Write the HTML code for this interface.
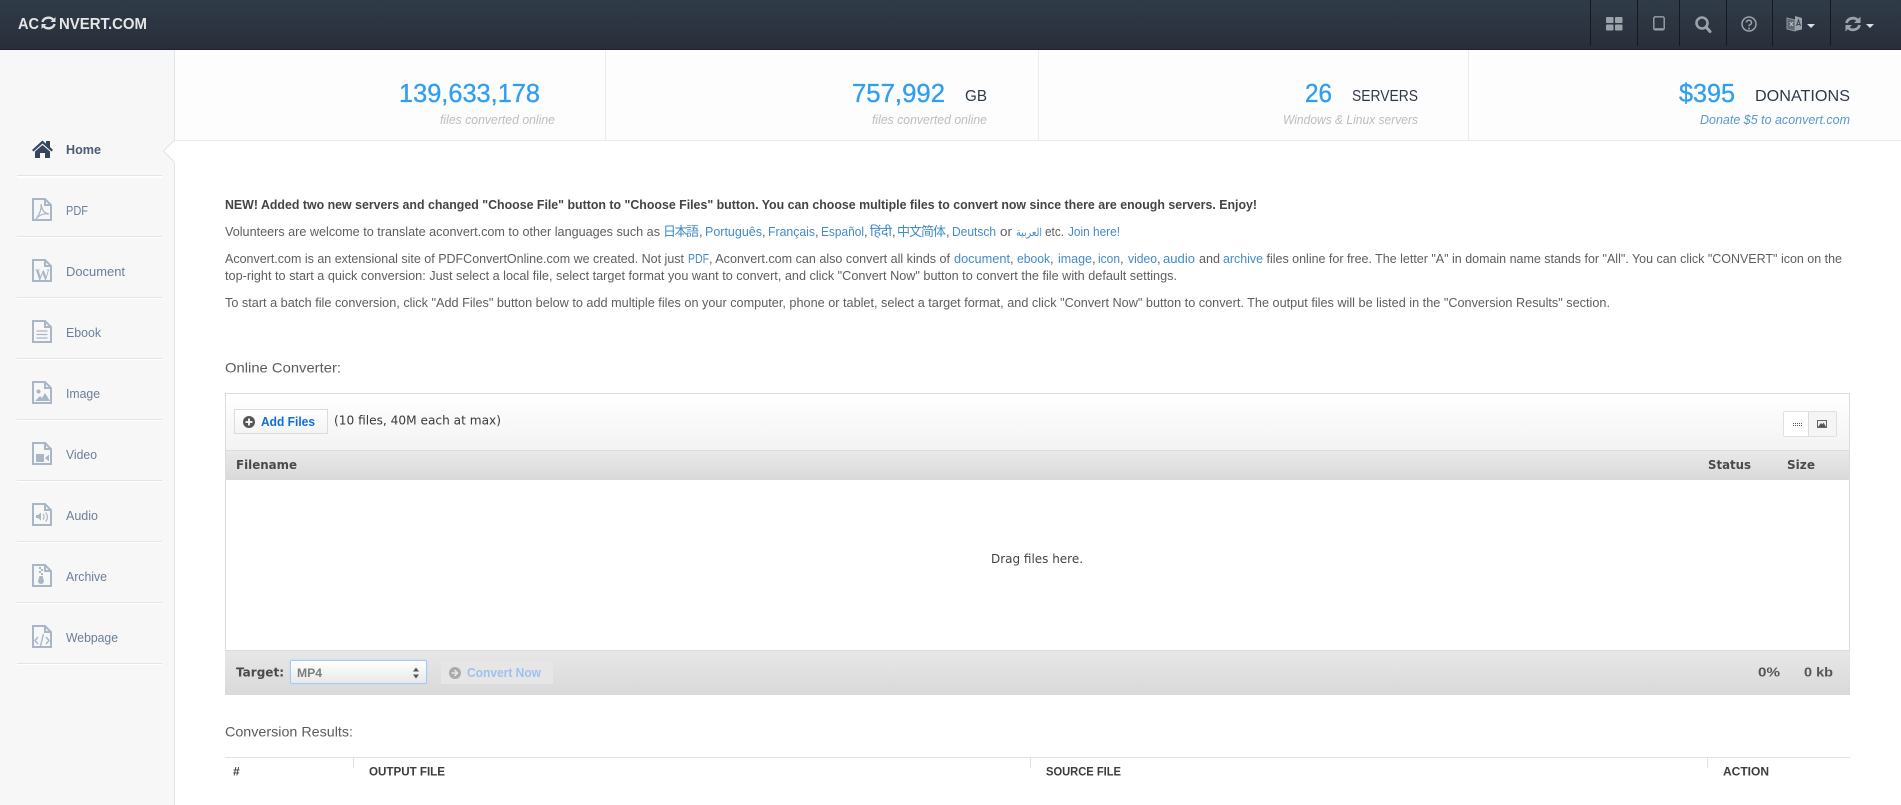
<!DOCTYPE html>
<html lang="en">
<head>
<meta charset="utf-8">
<title>Aconvert.com</title>
<style>
html,body{margin:0;padding:0;width:1901px;height:805px;overflow:hidden;background:#fff}
div{position:absolute;box-sizing:border-box}
svg{position:absolute;left:0;top:0}
text{font-family:"Liberation Sans","Noto Sans CJK JP",sans-serif;white-space:pre}
.b{font-size:13px;fill:#5e5e5e}
.l{font-size:13px;fill:#428bca}
.big{font-size:26px;fill:#2f9ff0;stroke:#2f9ff0;stroke-width:.35px}
.unit{font-size:16px;fill:#2f3a48}
.sub{font-size:13px;font-style:italic;fill:#bdbdbd}
.m{font-size:13px;fill:#6c7f99}
.h{font-size:14px;fill:#5c5c5c}
.d{font-family:"DejaVu Sans",sans-serif;font-size:12px}
.th{font-family:"DejaVu Sans",sans-serif;font-size:12px;font-weight:bold;fill:#4a4a4a}
.rh{font-size:12px;font-weight:bold;fill:#3c3c3c}
</style>
</head>
<body>
<div style="left:0;top:0;width:1901px;height:50px;background:linear-gradient(#2f3c48,#292e3a);border-bottom:1px solid #1d2129"></div>
<div style="left:0;top:50px;width:174px;height:755px;background:#f7f7f7"></div>
<div style="left:174px;top:50px;width:1727px;height:91px;background:#fdfdfd;border-bottom:1px solid #e9ecf0"></div>
<div style="left:174px;top:50px;width:1px;height:755px;background:#dde4ec"></div>
<div style="left:605px;top:50px;width:1px;height:90px;background:#e8ebf0"></div>
<div style="left:1038px;top:50px;width:1px;height:90px;background:#e8ebf0"></div>
<div style="left:1468px;top:50px;width:1px;height:90px;background:#e8ebf0"></div>

<div style="left:1590px;top:0;width:1px;height:46px;background:#15181f"></div>
<div style="left:1637px;top:0;width:1px;height:46px;background:#15181f"></div>
<div style="left:1679px;top:0;width:1px;height:46px;background:#15181f"></div>
<div style="left:1726px;top:0;width:1px;height:46px;background:#15181f"></div>
<div style="left:1772px;top:0;width:1px;height:46px;background:#15181f"></div>
<div style="left:1830px;top:0;width:1px;height:46px;background:#15181f"></div>

<div style="left:17px;top:175px;width:145px;height:3px;background:#fff;border-top:1px solid #dfe5ec"></div>
<div style="left:17px;top:236px;width:145px;height:2px;background:#fff;border-top:1px solid #dfe5ec"></div>
<div style="left:17px;top:297px;width:145px;height:2px;background:#fff;border-top:1px solid #dfe5ec"></div>
<div style="left:17px;top:358px;width:145px;height:2px;background:#fff;border-top:1px solid #dfe5ec"></div>
<div style="left:17px;top:419px;width:145px;height:2px;background:#fff;border-top:1px solid #dfe5ec"></div>
<div style="left:17px;top:480px;width:145px;height:2px;background:#fff;border-top:1px solid #dfe5ec"></div>
<div style="left:17px;top:541px;width:145px;height:2px;background:#fff;border-top:1px solid #dfe5ec"></div>
<div style="left:17px;top:602px;width:145px;height:2px;background:#fff;border-top:1px solid #dfe5ec"></div>
<div style="left:17px;top:663px;width:145px;height:2px;background:#fff;border-top:1px solid #dfe5ec"></div>

<div style="left:225px;top:393px;width:1625px;height:302px;border:1px solid #dcdcdc;border-bottom:0;background:#fff"></div>
<div style="left:226px;top:394px;width:1623px;height:56px;background:linear-gradient(#ffffff,#f3f3f3)"></div>
<div style="left:226px;top:450px;width:1623px;height:30px;background:linear-gradient(#e9e9e9,#d9d9d9);border-top:1px solid #dedede"></div>
<div style="left:225px;top:650px;width:1625px;height:45px;background:linear-gradient(#e7e7e7,#d9d9d9);border-top:1px solid #dcdcdc"></div>

<div style="left:234px;top:409px;width:94px;height:25px;background:linear-gradient(#fff,#f4f4f4);border:1px solid #dcdcdc"></div>
<div style="left:1783px;top:411px;width:54px;height:26px;background:#f5f5f5;border:1px solid #e0e0e0;border-radius:2px"></div>
<div style="left:1784px;top:412px;width:25px;height:24px;background:#fff;border-right:1px solid #dcdcdc"></div>
<div style="left:290px;top:660px;width:137px;height:24px;background:linear-gradient(#fff,#e9e9e9);border:1px solid #a8c9f5;border-radius:2px;box-shadow:0 0 2px #bcd6f8"></div>
<div style="left:441px;top:661px;width:112px;height:23px;background:#e6e6e6"></div>

<div style="left:225px;top:757px;width:1625px;height:1px;background:#e0e0e8"></div>
<div style="left:353px;top:757px;width:1px;height:11px;background:#e0e0e8"></div>
<div style="left:1030px;top:757px;width:1px;height:11px;background:#e0e0e8"></div>
<div style="left:1707px;top:757px;width:1px;height:11px;background:#e0e0e8"></div>

<svg width="1901" height="805" viewBox="0 0 1901 805" xmlns="http://www.w3.org/2000/svg">
  <defs>
    <g id="file" fill="none" stroke="#a9b6c6" stroke-width="2">
      <path d="M1 1H13L19 7V22H1Z"/><path d="M13 1V7H19"/>
    </g>
  </defs>

  <!-- sidebar notch -->
  <path d="M175 140L163 151L175 163Z" fill="#fff"/>
  <path d="M174.500 140L163.500 151L174.500 162" fill="none" stroke="#dde4ec" stroke-width="1"/>

  <!-- logo -->
  <text x="18" y="29" font-size="16" font-weight="bold" fill="#e6e6e6" textLength="21" lengthAdjust="spacingAndGlyphs">AC</text>
  <g transform="translate(48.500,23)" fill="none" stroke="#e0e0e0" stroke-width="2.400">
    <path d="M-6 -1A6 5 0 0 1 5 -3"/><path d="M6 1A6 5 0 0 1 -5 3"/>
    <path d="M7 -6V-1H2Z" fill="#e0e0e0" stroke="none"/><path d="M-7 6V1H-2Z" fill="#e0e0e0" stroke="none"/>
  </g>
  <text x="59" y="29" font-size="16" font-weight="bold" fill="#e6e6e6" textLength="88" lengthAdjust="spacingAndGlyphs">NVERT.COM</text>

  <!-- top icons -->
  <g fill="#9aa2aa">
    <rect x="1606" y="17" width="7.500" height="6" rx="1"/><rect x="1615" y="17" width="7.500" height="6" rx="1"/>
    <rect x="1606" y="24.500" width="7.500" height="6" rx="1"/><rect x="1615" y="24.500" width="7.500" height="6" rx="1"/>
  </g>
  <rect x="1653.800" y="16.800" width="10.400" height="13" rx="1.500" fill="none" stroke="#9aa2aa" stroke-width="1.400"/>
  <path d="M1655 28.800h8" stroke="#9aa2aa" stroke-width="1.200"/>
  <circle cx="1702" cy="23" r="5.500" fill="none" stroke="#9aa2aa" stroke-width="2.600"/>
  <path d="M1706 27L1710 31.500" stroke="#9aa2aa" stroke-width="3" stroke-linecap="round"/>
  <circle cx="1749" cy="24" r="7" fill="none" stroke="#9aa2aa" stroke-width="1.500"/>
  <path d="M1746.500 22.500a2.500 2.300 0 1 1 3.500 2.200c-.8.400-1 .8-1 1.600" fill="none" stroke="#9aa2aa" stroke-width="1.500"/>
  <circle cx="1749" cy="28.500" r="1" fill="#9aa2aa"/>
  <path d="M1787 18L1795 20V31L1787 29Z" fill="#5f6872" stroke="#8d959d" stroke-width="1"/>
  <path d="M1795 16L1802 18V29.500L1795 31Z" fill="#9aa2aa"/>
  <path d="M1790 22l3 4M1793 22l-3 4" stroke="#c3c8cd" stroke-width="1"/>
  <path d="M1796.500 26l2-6 2 6M1797.500 24.500h2" stroke="#39424e" stroke-width="1" fill="none"/>
  <path d="M1807 24h8l-4 4z" fill="#dcdfe2"/>
  <g transform="translate(1853,24)" fill="none" stroke="#9aa2aa" stroke-width="2.800">
    <path d="M-6.500 -1A6.500 6 0 0 1 5 -3.500"/><path d="M6.500 1A6.500 6 0 0 1 -5 3.500"/>
    <path d="M7.500 -7.500V-1H1Z" fill="#9aa2aa" stroke="none"/><path d="M-7.500 7.500V1H-1Z" fill="#9aa2aa" stroke="none"/>
  </g>
  <path d="M1866 24h8l-4 4z" fill="#dcdfe2"/>

  <!-- stats -->
  <text class="big" x="399" y="102" textLength="141" lengthAdjust="spacingAndGlyphs">139,633,178</text>
  <text class="sub" x="440" y="124" textLength="115" lengthAdjust="spacingAndGlyphs">files converted online</text>
  <text class="big" x="852" y="102" textLength="93" lengthAdjust="spacingAndGlyphs">757,992</text>
  <text class="unit" x="965" y="101" textLength="22" lengthAdjust="spacingAndGlyphs">GB</text>
  <text class="sub" x="872" y="124" textLength="115" lengthAdjust="spacingAndGlyphs">files converted online</text>
  <text class="big" x="1305" y="102" textLength="27" lengthAdjust="spacingAndGlyphs">26</text>
  <text class="unit" x="1352" y="101" textLength="66" lengthAdjust="spacingAndGlyphs">SERVERS</text>
  <text class="sub" x="1283" y="124" textLength="135" lengthAdjust="spacingAndGlyphs">Windows &amp; Linux servers</text>
  <text class="big" x="1679" y="102" textLength="56" lengthAdjust="spacingAndGlyphs">$395</text>
  <text class="unit" x="1755" y="101" textLength="95" lengthAdjust="spacingAndGlyphs">DONATIONS</text>
  <text class="sub" x="1700" y="124" textLength="150" lengthAdjust="spacingAndGlyphs" style="fill:#5a97d0">Donate $5 to aconvert.com</text>

  <!-- sidebar menu -->
  <path d="M32 150L42.500 140.500L46 143.700V141H50V147L53 150L51.500 151.500L42.500 143.500L33.500 151.500Z" fill="#34465c"/>
  <path d="M35 151.500L42.500 145L50 151.500V158H45V153H40V158H35Z" fill="#34465c"/>
  <text x="66" y="154" font-size="13" font-weight="bold" fill="#4a5c74" textLength="35" lengthAdjust="spacingAndGlyphs">Home</text>

  <use href="#file" x="32" y="198"/>
  <path d="M41 204c1 5 2 9 8 10c-5-1-10 1-13 5c3-4 6-9 5-15z" fill="none" stroke="#a9b6c6" stroke-width="1.200"/>
  <text class="m" x="66" y="215" textLength="22" lengthAdjust="spacingAndGlyphs">PDF</text>

  <use href="#file" x="32" y="259"/>
  <text x="35" y="280" font-family="Liberation Serif" font-size="16" font-weight="bold" fill="#a9b6c6" textLength="15" lengthAdjust="spacingAndGlyphs" style="font-family:'Liberation Serif',serif">W</text>
  <text class="m" x="66" y="276" textLength="59" lengthAdjust="spacingAndGlyphs">Document</text>

  <use href="#file" x="32" y="320"/>
  <path d="M36.500 331h11M36.500 334.500h11M36.500 338h11" stroke="#a9b6c6" stroke-width="1.300"/>
  <text class="m" x="66" y="337" textLength="35" lengthAdjust="spacingAndGlyphs">Ebook</text>

  <use href="#file" x="32" y="381"/>
  <circle cx="38.500" cy="391.500" r="2" fill="#a9b6c6"/>
  <path d="M35 401L40 396L42 398L45 393L50 401Z" fill="#a9b6c6"/>
  <text class="m" x="66" y="398" textLength="34" lengthAdjust="spacingAndGlyphs">Image</text>

  <use href="#file" x="32" y="442"/>
  <rect x="36" y="454" width="8" height="8" fill="#a9b6c6"/><path d="M45 458L49 454.500V461.500Z" fill="#a9b6c6"/>
  <text class="m" x="66" y="459" textLength="31" lengthAdjust="spacingAndGlyphs">Video</text>

  <use href="#file" x="32" y="503"/>
  <path d="M36 515h2l3-2.500v8l-3-2.500h-2z" fill="#a9b6c6"/>
  <path d="M43 514c1.500 1.500 1.500 4 0 5.500M45.500 512.500c2.500 2.500 2.500 6.500 0 9" fill="none" stroke="#a9b6c6" stroke-width="1.200"/>
  <text class="m" x="66" y="520" textLength="32" lengthAdjust="spacingAndGlyphs">Audio</text>

  <use href="#file" x="32" y="564"/>
  <path d="M39 567h2v2h-2zM41 569h2v2h-2zM39 571h2v2h-2zM41 573h2v2h-2z" fill="#a9b6c6"/>
  <path d="M39.500 576h3l1.500 5a3 3 0 1 1-6 0z" fill="#a9b6c6"/>
  <text class="m" x="66" y="581" textLength="41" lengthAdjust="spacingAndGlyphs">Archive</text>

  <use href="#file" x="32" y="625"/>
  <path d="M38 637l-3 3.500 3 3.500M46 637l3 3.500-3 3.500M43.500 634l-3 12" fill="none" stroke="#a9b6c6" stroke-width="1.400"/>
  <text class="m" x="66" y="642" textLength="52" lengthAdjust="spacingAndGlyphs">Webpage</text>

  <!-- intro text -->
  <text x="225" y="209" font-size="13" font-weight="bold" fill="#444" textLength="1032" lengthAdjust="spacingAndGlyphs">NEW! Added two new servers and changed "Choose File" button to "Choose Files" button. You can choose multiple files to convert now since there are enough servers. Enjoy!</text>

  <text class="b" x="225" y="236" textLength="435" lengthAdjust="spacingAndGlyphs">Volunteers are welcome to translate aconvert.com to other languages such as</text>
  <text class="l" x="663" y="236" textLength="36">日本語</text><text class="b" x="699" y="236">,</text>
  <text class="l" x="705" y="236" textLength="57" lengthAdjust="spacingAndGlyphs">Português</text><text class="b" x="762" y="236">,</text>
  <text class="l" x="768" y="236" textLength="47" lengthAdjust="spacingAndGlyphs">Français</text><text class="b" x="815" y="236">,</text>
  <text class="l" x="821" y="236" textLength="43" lengthAdjust="spacingAndGlyphs">Español</text><text class="b" x="864" y="236">,</text>
  <text class="l" x="870" y="236" textLength="22" lengthAdjust="spacingAndGlyphs">हिंदी</text><text class="b" x="892" y="236">,</text>
  <text class="l" x="897" y="236" textLength="49">中文简体</text><text class="b" x="946" y="236">,</text>
  <text class="l" x="952" y="236" textLength="44" lengthAdjust="spacingAndGlyphs">Deutsch</text>
  <text class="b" x="1000" y="236" textLength="12" lengthAdjust="spacingAndGlyphs">or</text>
  <text class="l" x="1016" y="236" textLength="26" lengthAdjust="spacingAndGlyphs" style="font-size:11px">العربية</text>
  <text class="b" x="1045" y="236" textLength="19" lengthAdjust="spacingAndGlyphs">etc.</text>
  <text class="l" x="1068" y="236" textLength="52" lengthAdjust="spacingAndGlyphs">Join here!</text>

  <text class="b" x="225" y="263" textLength="459" lengthAdjust="spacingAndGlyphs">Aconvert.com is an extensional site of PDFConvertOnline.com we created. Not just</text>
  <text class="l" x="688" y="263" textLength="21" lengthAdjust="spacingAndGlyphs">PDF</text>
  <text class="b" x="709" y="263" textLength="241" lengthAdjust="spacingAndGlyphs">, Aconvert.com can also convert all kinds of</text>
  <text class="l" x="954" y="263" textLength="56" lengthAdjust="spacingAndGlyphs">document</text><text class="b" x="1010" y="263">,</text>
  <text class="l" x="1017" y="263" textLength="33" lengthAdjust="spacingAndGlyphs">ebook</text><text class="b" x="1050" y="263">,</text>
  <text class="l" x="1058" y="263" textLength="34" lengthAdjust="spacingAndGlyphs">image</text><text class="b" x="1092" y="263">,</text>
  <text class="l" x="1098" y="263" textLength="22" lengthAdjust="spacingAndGlyphs">icon</text><text class="b" x="1120" y="263">,</text>
  <text class="l" x="1128" y="263" textLength="29" lengthAdjust="spacingAndGlyphs">video</text><text class="b" x="1157" y="263">,</text>
  <text class="l" x="1163" y="263" textLength="32" lengthAdjust="spacingAndGlyphs">audio</text>
  <text class="b" x="1199" y="263" textLength="21" lengthAdjust="spacingAndGlyphs">and</text>
  <text class="l" x="1223" y="263" textLength="40" lengthAdjust="spacingAndGlyphs">archive</text>
  <text class="b" x="1266.500" y="263" textLength="575.500" lengthAdjust="spacingAndGlyphs">files online for free. The letter "A" in domain name stands for "All". You can click "CONVERT" icon on the</text>

  <text class="b" x="225" y="280" textLength="952" lengthAdjust="spacingAndGlyphs">top-right to start a quick conversion: Just select a local file, select target format you want to convert, and click "Convert Now" button to convert the file with default settings.</text>
  <text class="b" x="225" y="307" textLength="1385" lengthAdjust="spacingAndGlyphs">To start a batch file conversion, click "Add Files" button below to add multiple files on your computer, phone or tablet, select a target format, and click "Convert Now" button to convert. The output files will be listed in the "Conversion Results" section.</text>

  <text class="h" x="225" y="372.500" textLength="116" lengthAdjust="spacingAndGlyphs">Online Converter:</text>

  <!-- converter toolbar -->
  <circle cx="249" cy="422" r="6" fill="#555"/>
  <path d="M245.500 422h7M249 418.500v7" stroke="#fff" stroke-width="1.800"/>
  <text x="261" y="426" font-size="13" font-weight="bold" fill="#0f6fd6" textLength="54" lengthAdjust="spacingAndGlyphs">Add Files</text>
  <text class="d" x="334" y="424.500" fill="#3a3a3a" textLength="167" lengthAdjust="spacingAndGlyphs">(10 files, 40M each at max)</text>
  <path d="M1793 423.500h9M1793 425.500h9" stroke="#555" stroke-width="1" stroke-dasharray="1 1"/>
  <rect x="1817.500" y="420.500" width="9" height="7" fill="#eee" stroke="#666" stroke-width="1"/>
  <path d="M1818 427L1821 423L1822.500 424.500L1823.500 422.500L1826 427Z" fill="#555"/>

  <text class="th" x="236" y="469" textLength="61" lengthAdjust="spacingAndGlyphs">Filename</text>
  <text class="th" x="1708" y="469" textLength="43" lengthAdjust="spacingAndGlyphs">Status</text>
  <text class="th" x="1787" y="469" textLength="28" lengthAdjust="spacingAndGlyphs">Size</text>

  <text class="d" x="991" y="563" fill="#444" textLength="92" lengthAdjust="spacingAndGlyphs">Drag files here.</text>

  <!-- converter footer -->
  <text class="th" x="236" y="676.500" textLength="48" lengthAdjust="spacingAndGlyphs">Target:</text>
  <text x="297" y="677" font-size="12" font-weight="bold" fill="#7d7d7d" textLength="25" lengthAdjust="spacingAndGlyphs">MP4</text>
  <path d="M413 671.500h6l-3-4zM413 674.500h6l-3 4z" fill="#555"/>
  <circle cx="455" cy="673" r="6" fill="#aaa"/>
  <path d="M451.500 673h5M454.500 670l3 3-3 3" fill="none" stroke="#e8e8e8" stroke-width="1.500"/>
  <text x="467" y="677" font-size="13" font-weight="bold" fill="#9ec2ec" textLength="74" lengthAdjust="spacingAndGlyphs">Convert Now</text>
  <text x="1758" y="676.500" font-size="13" font-weight="bold" fill="#555" textLength="22" lengthAdjust="spacingAndGlyphs">0%</text>
  <text x="1804" y="676.500" font-size="13" font-weight="bold" fill="#555" textLength="29" lengthAdjust="spacingAndGlyphs">0 kb</text>

  <text class="h" x="225" y="736.500" textLength="128" lengthAdjust="spacingAndGlyphs">Conversion Results:</text>
  <text class="rh" x="233" y="775.500">#</text>
  <text class="rh" x="369" y="775.500" textLength="76" lengthAdjust="spacingAndGlyphs">OUTPUT FILE</text>
  <text class="rh" x="1046" y="775.500" textLength="75" lengthAdjust="spacingAndGlyphs">SOURCE FILE</text>
  <text class="rh" x="1723" y="775.500" textLength="46" lengthAdjust="spacingAndGlyphs">ACTION</text>
</svg>
</body>
</html>
